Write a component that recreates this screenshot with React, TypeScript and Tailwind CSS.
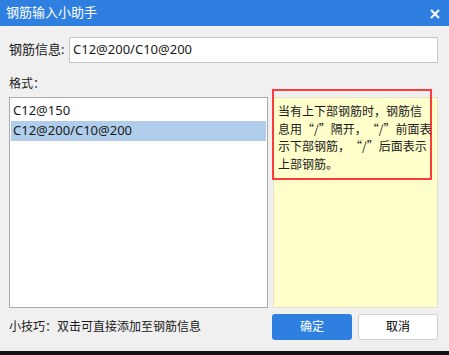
const font = "font-['Microsoft_YaHei','Noto_Sans','Noto_Sans_CJK_SC',sans-serif]";

const ITEMS = ["C12@150", "C12@200/C10@200"];

const NOTE = [
  "当有上下部钢筋时，钢筋信",
  "息用“/”隔开，“/”前面表",
  "示下部钢筋，“/”后面表示",
  "上部钢筋。",
];

export default function App() {
  return (
    <div
      className={`flex h-[355px] w-[449px] flex-col bg-[#f0f0f0] text-[12px] text-[#1a1a1a] [text-spacing-trim:space-all] ${font}`}
    >
      {/* title bar */}
      <div className="flex h-[26px] items-center justify-between bg-[#2e7fe0] pl-[6px] pr-[9px] text-[13px] text-white">
        <span>钢筋输入小助手</span>
        <svg width="10" height="10" viewBox="0 0 10 10" className="mt-[1px]">
          <path d="M1 1 L9 9 M9 1 L1 9" stroke="white" strokeWidth="2" />
        </svg>
      </div>

      <div className="flex flex-1 flex-col pl-[9px] pr-[11px]">
        <div className="mt-[11px] flex items-center">
          <span className="w-[60px] text-[13px]">钢筋信息:</span>
          <div className="flex h-[26px] flex-1 items-center border border-[#c6c6c6] bg-white pl-[3px] text-[13px]">
            C12@200/C10@200
          </div>
        </div>

        <div className="mt-[12px] text-[12px]">格式：</div>

        <div className="mt-[4px] flex h-[211px] gap-[5px]">
          <div className="flex w-[259px] flex-col border border-[#a9a9a9] bg-white p-[1px] pt-[3px] text-[13px]">
            {ITEMS.map((it, i) => (
              <div
                key={it}
                className={`flex h-[20px] items-center pl-[2px] ${i === 1 ? "bg-[#b1cdec]" : ""}`}
              >
                {it}
              </div>
            ))}
          </div>
          <div className="relative flex-1 border border-[#e3e3c8] bg-[#ffffcc]">
            {/* red annotation box */}
            <div className="absolute left-[-2px] top-[-9px] h-[91px] w-[160px] border-[2px] border-[#ff3a3a] pl-[4px] pt-[11px] font-['Noto_Sans_CJK_SC',sans-serif] text-[12px] leading-[17.5px]">
              {NOTE.map((l) => (
                <div key={l} className="whitespace-nowrap">
                  {l}
                </div>
              ))}
            </div>
          </div>
        </div>

        <div className="mt-[6px] flex items-center justify-between">
          <span className="text-[12px]">小技巧：双击可直接添加至钢筋信息</span>
          <div className="flex gap-[6px]">
            <button className="h-[26px] w-[80px] rounded-[3px] bg-[#2e7fe0] text-[12px] text-white">确定</button>
            <button className="h-[26px] w-[80px] rounded-[3px] border border-[#d0d0d0] bg-white text-[12px] text-black">
              取消
            </button>
          </div>
        </div>
      </div>

      <div className="h-[4px] bg-[#111]" />
    </div>
  );
}
